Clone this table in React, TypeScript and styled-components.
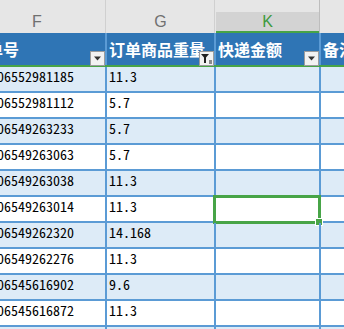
import React from 'react'
import styled, { createGlobalStyle } from 'styled-components'

const GlobalStyle = createGlobalStyle`
  *, *::before, *::after {
    box-sizing: border-box;
  }
  html, body {
    margin: 0;
    padding: 0;
    background: #fff;
    overflow: hidden;
  }
`

const COLS = '138px 109px 105px 80px'
const gridLine = '#5b9bd5'

const Sheet = styled.div`
  width: 344px;
  height: 329px;
  overflow: hidden;
  background: #fff;
`
const Track = styled.div`
  margin-left: -31px;
  width: 432px;
`

const LetterRow = styled.div`
  display: grid;
  grid-template-columns: ${COLS};
  height: 33px;
  background: #e6e6e6;
`
const Letter = styled.div<{ $selected?: boolean }>`
  display: flex;
  padding-top: 12px;
  margin-right: 1px;
  border-right: 1px solid ${p => (p.$selected ? '#bdbdbd' : '#d0d0d0')};
`
const LetterFace = styled.div<{ $selected?: boolean }>`
  flex: 1;
  display: flex;
  align-items: center;
  justify-content: center;
  font: 16px 'Liberation Sans', Arial, sans-serif;
  color: ${p => (p.$selected ? '#3d9a3d' : '#707070')};
  background: ${p => (p.$selected ? '#d3d3d3' : 'transparent')};
  border-bottom: 2px solid ${p => (p.$selected ? '#47a447' : 'transparent')};
`

const HeadRow = styled.div`
  display: grid;
  grid-template-columns: ${COLS};
  height: 34px;
  background: #2f75b5;
  border-bottom: 2px solid #47a447;
`
const HeadCell = styled.div`
  position: relative;
  display: flex;
  align-items: center;
  padding-left: 2px;
  border-right: 2px solid ${gridLine};
  color: #fff;
  font: 700 16px 'Noto Sans CJK SC', sans-serif;
  white-space: nowrap;
`
const DropButton = styled.div`
  position: absolute;
  right: 0;
  bottom: -1px;
  width: 15px;
  height: 15px;
  border: 1px solid #9c9c9c;
  background: #f2f2f2;
  display: flex;
  align-items: center;
  justify-content: center;
`

const Row = styled.div<{ $band: boolean }>`
  display: grid;
  grid-template-columns: ${COLS};
  height: 26px;
  background: ${p => (p.$band ? '#ddebf7' : '#fff')};
  border-bottom: 2px solid ${gridLine};
`
const Cell = styled.div<{ $indent?: number }>`
  position: relative;
  padding: 1px 0 0 2px;
  text-indent: ${p => p.$indent ?? 0}px;
  border-right: 2px solid ${gridLine};
  color: #000;
  font: 14px/16px 'Noto Sans Mono CJK SC', 'Noto Sans Mono CJK JP', 'Liberation Mono', monospace;
  white-space: nowrap;
`
const Selection = styled.div`
  position: absolute;
  left: -3px;
  top: -2px;
  width: 108px;
  height: 29px;
  border: 3px solid #47a447;
`
const FillHandle = styled.div`
  position: absolute;
  left: 100px;
  top: 21px;
  width: 6px;
  height: 6px;
  background: #47a447;
  box-shadow: 0 0 0 1px #fff;
`

const ArrowIcon = () => (
  <svg width="9" height="5" viewBox="0 0 9 5">
    <path d="M1 0.5 H8 L4.5 4.5 Z" fill="#333" />
  </svg>
)

const FilterIcon = () => (
  <svg width="13" height="13" viewBox="0 0 13 13">
    <path d="M1 2 H9 L6 5.5 V11 H4 V5.5 Z" fill="#222" />
    <path d="M9 9 H12 M9 11 H12" stroke="#222" strokeWidth="1" />
  </svg>
)

const rows: [string, string][] = [
  ['06552981185', '11.3'],
  ['06552981112', '5.7'],
  ['06549263233', '5.7'],
  ['06549263063', '5.7'],
  ['06549263038', '11.3'],
  ['06549263014', '11.3'],
  ['06549262320', '14.168'],
  ['06549262276', '11.3'],
  ['06545616902', '9.6'],
  ['06545616872', '11.3'],
  ['', ''],
]

export default function App() {
  return (
    <>
      <GlobalStyle />
      <Sheet>
        <Track>
          <LetterRow>
            <Letter><LetterFace>F</LetterFace></Letter>
            <Letter><LetterFace>G</LetterFace></Letter>
            <Letter $selected><LetterFace $selected>K</LetterFace></Letter>
            <Letter><LetterFace /></Letter>
          </LetterRow>
          <HeadRow>
            <HeadCell>
              运单号
              <DropButton><ArrowIcon /></DropButton>
            </HeadCell>
            <HeadCell>
              订单商品重量
              <DropButton><FilterIcon /></DropButton>
            </HeadCell>
            <HeadCell>
              快递金额
              <DropButton><ArrowIcon /></DropButton>
            </HeadCell>
            <HeadCell>备注</HeadCell>
          </HeadRow>
          {rows.map(([no, weight], i) => (
            <Row key={i} $band={i % 2 === 0}>
              <Cell $indent={26}>{no}</Cell>
              <Cell>{weight}</Cell>
              <Cell>
                {i === 5 && (
                  <Selection>
                    <FillHandle />
                  </Selection>
                )}
              </Cell>
              <Cell />
            </Row>
          ))}
        </Track>
      </Sheet>
    </>
  )
}
